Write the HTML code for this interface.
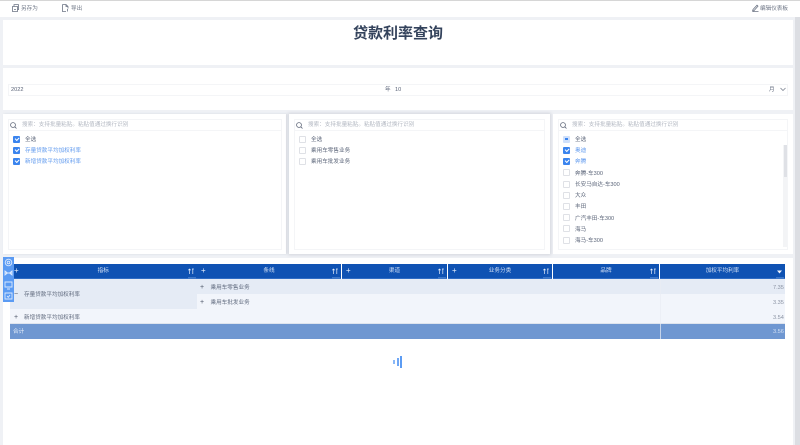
<!DOCTYPE html>
<html lang="zh"><head><meta charset="utf-8"><style>
html,body{margin:0;padding:0;width:800px;height:445px;overflow:hidden;background:#eff1f5}
body{position:relative;font-family:"Liberation Sans","Noto Sans CJK SC",sans-serif;font-size:5.6px;color:#5a6478;filter:blur(.3px)}
div,span,svg{position:absolute;box-sizing:border-box;white-space:nowrap}
.w{background:#fff}
.t{line-height:8px;height:8px;margin-top:1px}
.cb{width:7px;height:7px;border:1px solid #dfe1e6;border-radius:1px;background:#fff;margin-top:.2px}
.cb.on{background:#3a84ee;border-color:#3a84ee}
.cb.on:after{content:"";position:absolute;left:.8px;top:.5px;width:3.4px;height:1.8px;border-left:.9px solid #fff;border-bottom:.9px solid #fff;transform:rotate(-45deg)}
.bl{color:#5f99ee}
.bx{background:#fff;border:1px solid #f4f5f7}
.ph{color:#b3b8c2}
.hd{top:264px;height:15px;background:#0f52b3;border-bottom:1px solid #2f6cc4}
.hd .n{color:#d5e2f5;line-height:15px;text-align:center;left:0;right:0}
.hd .p{left:4px;top:0;line-height:14px;color:#e5edfa;font-size:8px}
.hd .s{right:3px;top:3.500px}
.hd .m{right:1px;bottom:-1px;width:8px;height:2px;background:#3c76c8}
.r{left:10px;width:775px}
.c{line-height:8px;color:#5e687c;margin-top:1px}
.v{color:#8a92a2;line-height:8px;margin-top:1px}
</style></head><body>
<div style="left:0;top:0;width:800px;height:1px;background:#d6d6d6"></div>
<div class="w" style="left:0;top:1px;width:800px;height:16px"></div>
<svg style="left:12px;top:4px" width="7" height="8" viewBox="0 0 7 8" fill="none" stroke="#6c7484" stroke-width=".8"><path d="M.5 2.500h5v5h-5zM2 2.500V.6h4.500v5H5.500M2 5.500h2"/></svg>
<div class="t" style="left:21px;top:4px;color:#6c7484">另存为</div>
<svg style="left:62px;top:4px" width="7" height="8" viewBox="0 0 7 8" fill="none" stroke="#6c7484" stroke-width=".8"><path d="M.5.5h3.500l2 2v2M.5.5v7h3.500M4 .5v2h2M5.500 5v2.500"/></svg>
<div class="t" style="left:71px;top:4px;color:#6c7484">导出</div>
<svg style="left:752px;top:4px" width="7" height="8" viewBox="0 0 7 8" fill="none" stroke="#6c7484" stroke-width=".8"><path d="M1 5.500L5 1.200l1 1L2 6.600l-1.400.3zM.5 7.500h6"/></svg>
<div class="t" style="left:760px;top:4px;color:#6c7484">编辑仪表板</div>

<div style="left:795px;top:17px;width:5px;height:428px;background:#dcdee3"></div>

<div class="w" style="left:3px;top:20px;width:790px;height:45px"></div>
<div style="left:3px;width:790px;top:25px;text-align:center;font-size:15px;line-height:18px;font-weight:bold;color:#34435c">贷款利率查询</div>

<div class="w" style="left:3px;top:68px;width:790px;height:42px"></div>
<div class="bx" style="left:8px;top:84px;width:780px;height:12px"></div>
<div class="t" style="left:11px;top:85px">2022</div>
<div class="t" style="left:385px;top:85px">年</div>
<div class="t" style="left:395px;top:85px">10</div>
<div class="t" style="left:769px;top:85px">月</div>
<svg style="left:780px;top:87px" width="6" height="5" viewBox="0 0 6 5" fill="none" stroke="#6c7484" stroke-width=".7"><path d="M.5 1l2.500 2.500L5.500 1"/></svg>

<div class="w" style="left:3px;top:114px;width:283px;height:140px;box-shadow:1px 0 2px #d5d8df"></div>
<div class="bx" style="left:8px;top:119px;width:274px;height:131px"></div>
<div style="left:8px;top:130px;width:274px;height:1px;background:#f4f5f7"></div>
<svg style="left:10px;top:122px" width="7" height="7" viewBox="0 0 7 7" fill="none" stroke="#5d6577" stroke-width=".8"><circle cx="3" cy="3" r="2.400"/><path d="M4.800 4.800L6.500 6.500"/></svg>
<div class="t ph" style="left:22px;top:120px">搜索：支持批量粘贴。粘贴值通过换行识别</div>
<div class="cb on" style="left:13px;top:135.500px"></div><div class="t" style="left:25px;top:135px">全选</div>
<div class="cb on" style="left:13px;top:146.500px"></div><div class="t bl" style="left:25px;top:146px">存量贷款平均加权利率</div>
<div class="cb on" style="left:13px;top:157.500px"></div><div class="t bl" style="left:25px;top:157px">新增贷款平均加权利率</div>

<div class="w" style="left:289px;top:114px;width:261px;height:140px;box-shadow:0 0 3px 1px #d3d6dd"></div>
<div class="bx" style="left:294px;top:119px;width:251px;height:131px"></div>
<div style="left:294px;top:130px;width:251px;height:1px;background:#f4f5f7"></div>
<svg style="left:296px;top:122px" width="7" height="7" viewBox="0 0 7 7" fill="none" stroke="#5d6577" stroke-width=".8"><circle cx="3" cy="3" r="2.400"/><path d="M4.800 4.800L6.500 6.500"/></svg>
<div class="t ph" style="left:308px;top:120px">搜索：支持批量粘贴。粘贴值通过换行识别</div>
<div class="cb" style="left:299px;top:135.500px"></div><div class="t" style="left:311px;top:135px">全选</div>
<div class="cb" style="left:299px;top:146.500px"></div><div class="t" style="left:311px;top:146px">乘用车零售业务</div>
<div class="cb" style="left:299px;top:157.500px"></div><div class="t" style="left:311px;top:157px">乘用车批发业务</div>

<div class="w" style="left:553px;top:114px;width:240px;height:140px"></div>
<div class="bx" style="left:558px;top:119px;width:230px;height:131px"></div>
<div style="left:558px;top:130px;width:230px;height:1px;background:#f4f5f7"></div>
<svg style="left:560px;top:122px" width="7" height="7" viewBox="0 0 7 7" fill="none" stroke="#5d6577" stroke-width=".8"><circle cx="3" cy="3" r="2.400"/><path d="M4.800 4.800L6.500 6.500"/></svg>
<div class="t ph" style="left:572px;top:120px">搜索：支持批量粘贴。粘贴值通过换行识别</div>
<div class="cb" style="left:563px;top:135.500px;background:#cfe0fb;border-color:#cfe0fb"></div><div style="left:565.200px;top:137.800px;width:2.600px;height:2.600px;background:#3a84ee"></div><div class="t" style="left:575px;top:135px">全选</div>
<div class="cb on" style="left:563px;top:146.500px"></div><div class="t bl" style="left:575px;top:146px">奥迪</div>
<div class="cb on" style="left:563px;top:157.500px"></div><div class="t bl" style="left:575px;top:157px">奔腾</div>
<div class="cb" style="left:563px;top:169px"></div><div class="t" style="left:575px;top:168.500px">奔腾-车300</div>
<div class="cb" style="left:563px;top:180.500px"></div><div class="t" style="left:575px;top:180px">长安马自达-车300</div>
<div class="cb" style="left:563px;top:191.500px"></div><div class="t" style="left:575px;top:191px">大众</div>
<div class="cb" style="left:563px;top:202.500px"></div><div class="t" style="left:575px;top:202px">丰田</div>
<div class="cb" style="left:563px;top:214px"></div><div class="t" style="left:575px;top:213.500px">广汽丰田-车300</div>
<div class="cb" style="left:563px;top:225px"></div><div class="t" style="left:575px;top:224.500px">海马</div>
<div class="cb" style="left:563px;top:236.500px"></div><div class="t" style="left:575px;top:236px">海马-车300</div>
<div style="left:783px;top:145px;width:4px;height:102px;background:#f3f4f6"></div>
<div style="left:784px;top:145px;width:3px;height:32px;background:#dfe1e6"></div>

<div class="w" style="left:3px;top:258px;width:790px;height:187px"></div>

<div class="hd" style="left:10px;width:186.500px"><div class="n">指标</div><div class="p">+</div><div class="m"></div><svg class="s" width="6" height="7" viewBox="0 0 6 7" fill="none" stroke="#e5edfa" stroke-width=".7"><path d="M1.500 1v5M.3 2.200L1.500 1l1.200 1.200M4 1h1.800M4.800 1v5"/></svg></div>
<div class="hd" style="left:197px;width:144px"><div class="n">条线</div><div class="p">+</div><div class="m"></div><svg class="s" width="6" height="7" viewBox="0 0 6 7" fill="none" stroke="#e5edfa" stroke-width=".7"><path d="M1.500 1v5M.3 2.200L1.500 1l1.200 1.200M4 1h1.800M4.800 1v5"/></svg></div>
<div class="hd" style="left:342px;width:105px"><div class="n">渠道</div><div class="p">+</div><div class="m"></div><svg class="s" width="6" height="7" viewBox="0 0 6 7" fill="none" stroke="#e5edfa" stroke-width=".7"><path d="M1.500 1v5M.3 2.200L1.500 1l1.200 1.200M4 1h1.800M4.800 1v5"/></svg></div>
<div class="hd" style="left:448px;width:104px"><div class="n">业务分类</div><div class="p">+</div><div class="m"></div><svg class="s" width="6" height="7" viewBox="0 0 6 7" fill="none" stroke="#e5edfa" stroke-width=".7"><path d="M1.500 1v5M.3 2.200L1.500 1l1.200 1.200M4 1h1.800M4.800 1v5"/></svg></div>
<div class="hd" style="left:553px;width:106px"><div class="n">品牌</div><div class="m"></div><svg class="s" width="6" height="7" viewBox="0 0 6 7" fill="none" stroke="#e5edfa" stroke-width=".7"><path d="M1.500 1v5M.3 2.200L1.500 1l1.200 1.200M4 1h1.800M4.800 1v5"/></svg></div>
<div class="hd" style="left:660px;width:125px"><div class="n">加权平均利率</div><div class="m"></div><svg style="right:3px;top:5.500px" width="5" height="4" viewBox="0 0 5 4"><path d="M0 .5h5L2.500 3.500z" fill="#f2f6fd"/></svg></div>

<div class="r" style="top:279px;height:15px;background:#e5ebf5"></div>
<div class="r" style="top:294px;height:15px;background:#f2f5fb"></div>
<div style="left:10px;top:279px;width:187px;height:30px;background:#e5ebf5"></div>
<div class="r" style="top:309px;height:15px;background:#f2f5fb;border-bottom:1px solid #dfe4ed"></div>
<div class="r" style="top:324px;height:14.500px;background:#6f97d1"></div>
<div style="left:659.500px;top:279px;width:.700px;height:59.500px;background:#e9edf4;opacity:.7"></div>

<div class="c" style="left:14px;top:290px;font-size:7px;color:#4d5668">−</div>
<div class="c" style="left:24px;top:290px">存量贷款平均加权利率</div>
<div class="c" style="left:200px;top:282.500px;font-size:7px;color:#4d5668">+</div>
<div class="c" style="left:210.500px;top:282.500px">乘用车零售业务</div>
<div class="c" style="left:200px;top:297.500px;font-size:7px;color:#4d5668">+</div>
<div class="c" style="left:210.500px;top:297.500px">乘用车批发业务</div>
<div class="c" style="left:14px;top:312.500px;font-size:7px;color:#4d5668">+</div>
<div class="c" style="left:24px;top:312.500px">新增贷款平均加权利率</div>
<div class="c" style="left:13px;top:327px;color:#e9effa">合计</div>
<div class="v" style="left:773px;top:282.500px">7.35</div>
<div class="v" style="left:773px;top:297.500px">3.35</div>
<div class="v" style="left:773px;top:312.500px">3.54</div>
<div class="v" style="left:773px;top:327px;color:#d3e0f4">3.56</div>

<div style="left:3px;top:257px;width:11px;height:45px;background:#5b9bf3"></div>
<svg style="left:4px;top:258px" width="9" height="43" viewBox="0 0 9 43" fill="none" stroke="#dbe9fe" stroke-width=".9"><circle cx="4.500" cy="4.500" r="3.300"/><circle cx="4.500" cy="4.500" r="1.300"/><path d="M1 13l2.500 2L1 17zM8 13l-2.500 2 2.500 2zM1 15h7M1 24h7v5H1zM3 31h3M1 35h7v6H1zM3 38l1.300 1.300L6 37"/></svg>

<div style="left:393.300px;top:360px;width:2px;height:4px;background:#8ab8f7"></div>
<div style="left:396.700px;top:358px;width:2px;height:8px;background:#6fa7f5"></div>
<div style="left:400px;top:356px;width:2.200px;height:12px;background:#5c9cf3"></div>
</body></html>
